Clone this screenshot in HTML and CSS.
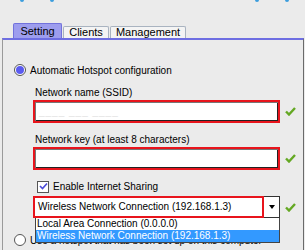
FILE: index.html
```html
<!DOCTYPE html>
<html lang="en">
<head>
    <meta charset="UTF-8">
    <title>Hotspot Settings</title>
    <link rel="stylesheet" href="styles.css">
</head>
<body>
    <div class="dots">
        <span class="dot d1"></span>
        <span class="dot d2"></span>
        <span class="dot d3"></span>
        <span class="dot d4"></span>
    </div>

    <div class="tabs">
        <div class="tab active">Setting</div>
        <div class="tab">Clients</div>
        <div class="tab">Management</div>
    </div>

    <div class="panel">
        <div class="radio-row">
            <span class="radio checked"></span>
            <span>Automatic Hotspot configuration</span>
        </div>

        <div class="group">
            <div class="field-label">Network name (SSID)</div>
            <div class="field-row">
                <div class="input"><span class="blur">____ ___ ____</span></div>
                <svg class="ok" width="11" height="9" viewBox="0 0 11 9"><path d="M1 4.5 L4 7.5 L10 1" fill="none" stroke="#64a823" stroke-width="2.4"/></svg>
            </div>

            <div class="field-label">Network key (at least 8 characters)</div>
            <div class="field-row">
                <div class="input"></div>
                <svg class="ok" width="11" height="9" viewBox="0 0 11 9"><path d="M1 4.5 L4 7.5 L10 1" fill="none" stroke="#64a823" stroke-width="2.4"/></svg>
            </div>

            <div class="check-row">
                <span class="checkbox">
                    <svg width="9" height="9" viewBox="0 0 9 9"><path d="M1 4 L3.5 6.5 L8 1.5" fill="none" stroke="#4a4ad8" stroke-width="1.6"/></svg>
                </span>
                <span>Enable Internet Sharing</span>
            </div>

            <div class="field-row combo-row">
                <div class="combo">
                    <div class="combo-text">Wireless Network Connection (192.168.1.3)</div>
                    <div class="combo-btn"><span class="arrow"></span></div>
                    <ul class="combo-list">
                        <li>Local Area Connection (0.0.0.0)</li>
                        <li class="selected">Wireless Network Connection (192.168.1.3)</li>
                    </ul>
                </div>
                <svg class="ok" width="11" height="9" viewBox="0 0 11 9"><path d="M1 4.5 L4 7.5 L10 1" fill="none" stroke="#64a823" stroke-width="2.4"/></svg>
            </div>
        </div>

        <div class="radio-row second">
            <span class="radio"></span>
            <span>Use a hotspot that has been set up on this computer</span>
        </div>
    </div>
</body>
</html>
```

FILE: styles.css
```css
* {
    margin: 0;
    padding: 0;
    box-sizing: border-box;
}

body {
    width: 305px;
    height: 250px;
    overflow: hidden;
    background: #ebebeb;
    color: #000;
    font-family: 'Liberation Sans', Arial, sans-serif;
    font-size: 10px;
}

/* bits of the icons above the tabs */
.dots {
    display: flex;
    height: 2px;
}

.dot {
    width: 4px;
    height: 2px;
    border-radius: 0 0 2px 2px;
    background: #3c9ddd;
}

.d1 { margin-left: 20px; }
.d2 { margin-left: 26px; }
.d3 { margin-left: 201px; }
.d4 { margin-left: 26px; }

.tabs {
    display: flex;
    align-items: flex-end;
    height: 36px;
    padding-left: 13px;
    font-size: 11px;
}

.tab {
    height: 12px;
    line-height: 11px;
    background: #f4f4f4;
    border: 1px solid #a9b3c0;
    border-bottom: none;
    border-radius: 2px 2px 0 0;
    margin-right: 1px;
    text-align: center;
}

.tab:nth-child(2) { width: 46px; }
.tab:nth-child(3) { width: 76px; }

.tab.active {
    width: 49px;
    height: 15px;
    line-height: 15px;
    background: #9d9dee;
    border-color: #7272dc;
}

.panel {
    margin: 0 1px 0 2px;
    height: 212px;
    border-top: 2px solid #6e6ee2;
    border-left: 1px solid #9a9a9a;
    border-right: 1px solid #6a6a6a;
    padding: 24px 0 0 11px;
}

.radio-row {
    display: flex;
    align-items: center;
    gap: 4px;
    height: 12px;
}

.radio {
    width: 12px;
    height: 12px;
    border-radius: 50%;
    border: 1px solid #555;
    background: #fff;
    position: relative;
    flex: none;
}

.radio.checked::after {
    content: '';
    position: absolute;
    left: 1px;
    top: 1px;
    width: 8px;
    height: 8px;
    border-radius: 50%;
    background: #5b5bf0;
}

.group {
    margin: 10px 0 0 19px;
}

.field-label {
    height: 13px;
    line-height: 13px;
    padding-left: 2px;
}

.field-row {
    display: flex;
    align-items: center;
    gap: 5px;
    margin: 1px 0 10px;
}

.input {
    width: 247px;
    height: 23px;
    border: 2px solid #e8141c;
    background: #fff;
    box-shadow: inset 1px 1px 0 #777, inset -1px -1px 0 #222;
    padding: 4px 0 0 4px;
}

.blur {
    color: #e2e2e2;
    letter-spacing: 1px;
}

.ok {
    flex: none;
}

.check-row {
    display: flex;
    align-items: center;
    gap: 4px;
    height: 13px;
    margin: 6px 0 0 4px;
}

.checkbox {
    width: 12px;
    height: 12px;
    border: 1px solid #555;
    background: #fff;
    display: flex;
    align-items: center;
    justify-content: center;
}

.combo-row {
    margin-top: 3px;
}

.combo {
    position: relative;
    display: flex;
    width: 247px;
    height: 22px;
}

.combo-text {
    width: 231px;
    border: 2px solid #e8141c;
    background: #fff;
    line-height: 18px;
    padding-left: 3px;
    white-space: nowrap;
}

.combo-btn {
    flex: 1;
    border: 1px solid #333;
    border-left: none;
    background: #fff;
    display: flex;
    align-items: center;
    justify-content: center;
}

.arrow {
    border-left: 3px solid transparent;
    border-right: 3px solid transparent;
    border-top: 4px solid #000;
}

.combo-list {
    position: absolute;
    top: 100%;
    left: 2px;
    right: 0;
    list-style: none;
    background: #fff;
    border: 1px solid #444;
    border-top: none;
    z-index: 2;
}

.combo-list li {
    height: 12px;
    line-height: 12px;
    padding-left: 1px;
    white-space: nowrap;
}

.combo-list li.selected {
    background: #3399ff;
    color: #fff;
}

.radio-row.second {
    margin-top: 16px;
}
```
